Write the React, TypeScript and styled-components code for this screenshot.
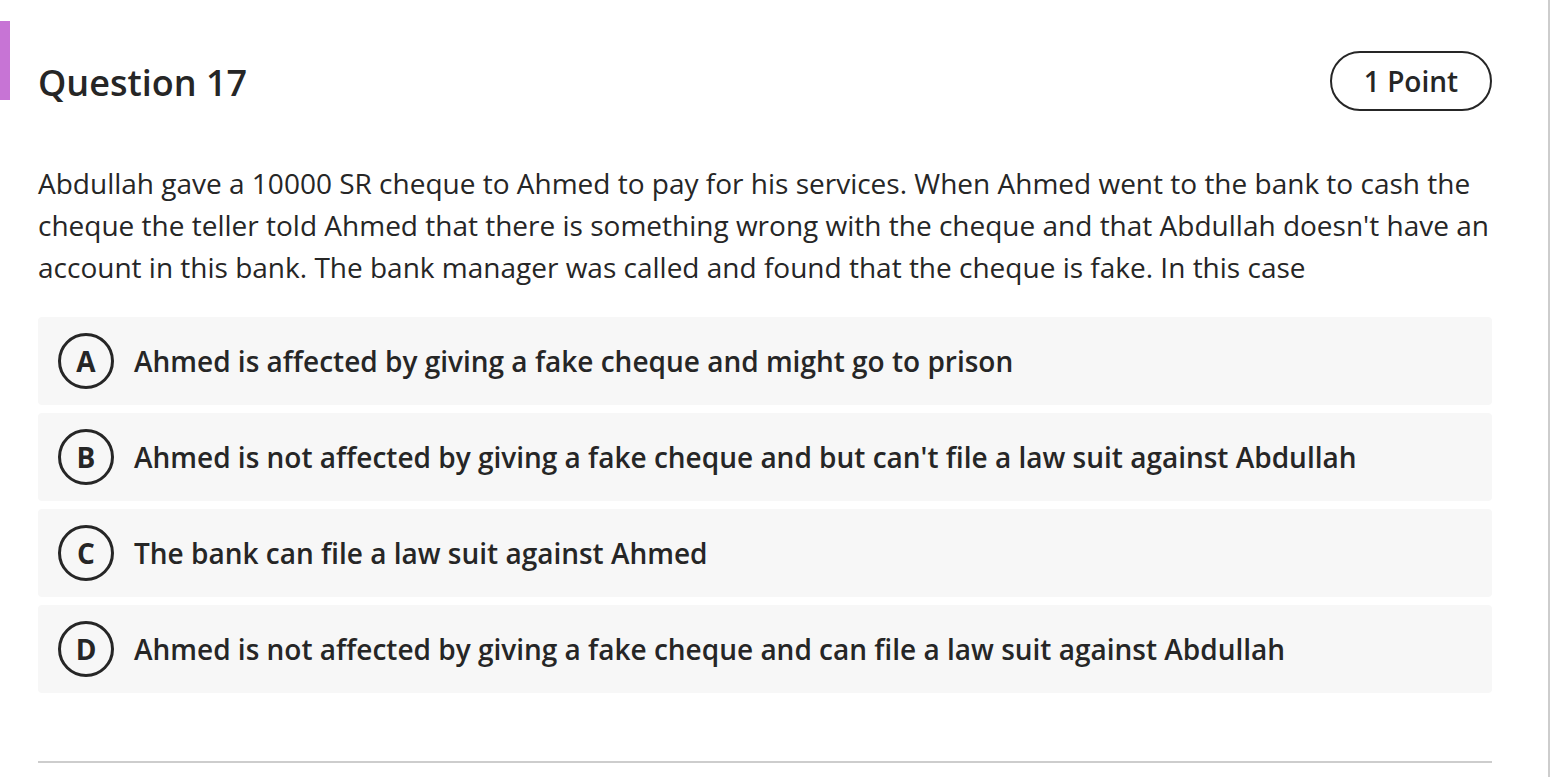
import React from 'react';
import styled, { createGlobalStyle } from 'styled-components';

const GlobalStyle = createGlobalStyle`
    html, body {
        margin: 0;
        padding: 0;
        background: #ffffff;
        font-family: "Open Sans", "Noto Sans", sans-serif;
        color: #262626;
    }
`;

const Page = styled.div`
    width: 1550px;
    min-height: 777px;
    border-right: 2px solid #cdcdcd;
    box-sizing: border-box;
    position: relative;
`;

const Accent = styled.div`
    position: absolute;
    left: 0;
    top: 21px;
    width: 10px;
    height: 79px;
    background: #c774d5;
`;

const Content = styled.div`
    padding: 51px 0 0 38px;
    width: 1454px;
`;

const Header = styled.div`
    display: flex;
    justify-content: space-between;
    align-items: center;
    height: 60px;
`;

const Title = styled.h2`
    margin: 0;
    font-size: 36px;
    font-weight: 600;
    color: #262626;
    padding-top: 2px;
`;

const PointPill = styled.div`
    height: 60px;
    width: 162px;
    box-sizing: border-box;
    border: 2px solid #262626;
    border-radius: 30px;
    display: flex;
    align-items: center;
    justify-content: center;
    font-size: 28px;
    font-weight: 600;
`;

const Prompt = styled.p`
    margin: 51px 0 0;
    font-size: 28px;
    line-height: 42px;
    font-weight: 400;
    color: #262626;
`;

const Options = styled.div`
    margin-top: 29px;
    display: flex;
    flex-direction: column;
    gap: 8px;
`;

const Option = styled.div`
    height: 88px;
    background: #f7f7f7;
    border-radius: 4px;
    display: flex;
    align-items: center;
    padding-left: 20px;
    gap: 20px;
`;

const Letter = styled.div`
    width: 56px;
    height: 56px;
    box-sizing: border-box;
    border: 3px solid #262626;
    border-radius: 50%;
    display: flex;
    align-items: center;
    justify-content: center;
    font-size: 28px;
    font-weight: 700;
    flex-shrink: 0;
`;

const OptionText = styled.span`
    font-size: 28px;
    font-weight: 600;
    color: #262626;
`;

const Divider = styled.hr`
    margin: 68px 0 0;
    border: none;
    border-top: 2px solid #cdcdcd;
`;

const answers = [
    { key: 'A', text: 'Ahmed is affected by giving a fake cheque and might go to prison' },
    { key: 'B', text: "Ahmed is not affected by giving a fake cheque and but can't file a law suit against Abdullah" },
    { key: 'C', text: 'The bank can file a law suit against Ahmed' },
    { key: 'D', text: 'Ahmed is not affected by giving a fake cheque and can file a law suit against Abdullah' },
];

const App = (): JSX.Element => {
    return (
        <>
            <GlobalStyle />
            <Page>
                <Accent />
                <Content>
                    <Header>
                        <Title>Question 17</Title>
                        <PointPill>1 Point</PointPill>
                    </Header>
                    <Prompt>
                        Abdullah gave a 10000 SR cheque to Ahmed to pay for his services. When Ahmed went to the bank to cash the cheque the teller told Ahmed that there is something wrong with the cheque and that Abdullah doesn't have an account in this bank. The bank manager was called and found that the cheque is fake. In this case
                    </Prompt>
                    <Options>
                        {answers.map(a => (
                            <Option key={a.key}>
                                <Letter>{a.key}</Letter>
                                <OptionText>{a.text}</OptionText>
                            </Option>
                        ))}
                    </Options>
                    <Divider />
                </Content>
            </Page>
        </>
    );
};

export default App;
